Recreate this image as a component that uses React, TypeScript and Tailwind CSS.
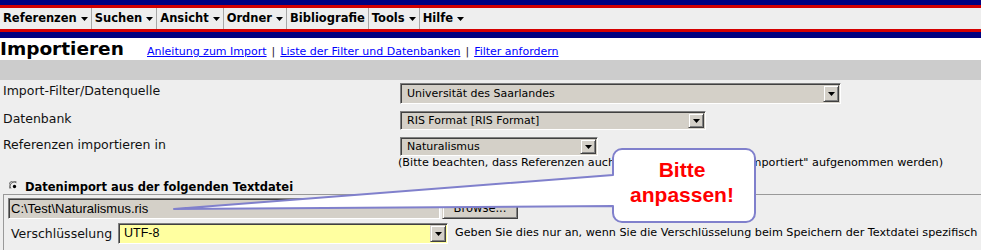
import React from "react";

const menu = [
  { label: "Referenzen", arrow: true },
  { label: "Suchen", arrow: true },
  { label: "Ansicht", arrow: true },
  { label: "Ordner", arrow: true },
  { label: "Bibliografie", arrow: false },
  { label: "Tools", arrow: true },
  { label: "Hilfe", arrow: true },
];

function Caret() {
  return (
    <svg width="7" height="4" viewBox="0 0 7 4" className="shrink-0">
      <path d="M0 0H7L3.5 4Z" fill="#000" />
    </svg>
  );
}

function DropButton() {
  return (
    <div className="flex h-full w-[16px] shrink-0 items-center justify-center border border-t-[#d4d0c8] border-l-[#d4d0c8] border-r-[#404040] border-b-[#404040] bg-[#d4d0c8] shadow-[inset_1px_1px_0_#ffffff,inset_-1px_-1px_0_#808080]">
      <Caret />
    </div>
  );
}

function Select({ value, className }: { value: string; className: string }) {
  return (
    <div
      className={`flex shrink-0 items-stretch border border-t-[#808080] border-l-[#808080] border-r-white border-b-white p-[1px] pl-[6px] shadow-[inset_1px_1px_0_#404040] ${className}`}
    >
      <span className="flex flex-1 items-center overflow-hidden whitespace-nowrap">{value}</span>
      <DropButton />
    </div>
  );
}

function Radio() {
  return (
    <svg width="11" height="11" viewBox="0 0 12 12" className="shrink-0">
      <path d="M1 8A5 5 0 0 1 8 1" stroke="#808080" strokeWidth="1.2" fill="none" />
      <path d="M2.5 8.5A4 4 0 0 1 8.5 2.5" stroke="#404040" strokeWidth="1" fill="none" />
      <circle cx="6" cy="6" r="4" fill="#eeeeee" />
      <circle cx="6" cy="6" r="1.8" fill="#000" />
    </svg>
  );
}

export default function App() {
  return (
    <div className="relative h-[250px] w-[981px] overflow-hidden bg-[#eeeeee] font-['DejaVu_Sans',sans-serif] text-[#111]">
      <div className="h-[5px] bg-[#000080]" />
      <div className="h-[3px] bg-[#d40000]" />
      <nav className="flex h-[21px] items-center bg-[#eeeeee] text-[11.5px] font-bold text-black">
        {menu.map((m, i) => (
          <div
            key={m.label}
            className={`flex h-full items-center gap-[4px] px-[3px] ${i < menu.length - 1 ? "border-r border-[#a8a8a8]" : ""}`}
          >
            <span>{m.label}</span>
            {m.arrow && <Caret />}
          </div>
        ))}
      </nav>
      <div className="h-[3px] bg-[#d40000]" />
      <div className="h-[6px] bg-[#000080]" />

      <div className="flex h-[22px] items-baseline bg-white">
        <h1 className="w-[147px] shrink-0 text-[18.5px] leading-[22px] font-bold text-black">Importieren</h1>
        <div className="whitespace-nowrap text-[11px] text-[#222]">
          <a className="text-[#0000ff] underline">Anleitung zum Import</a>
          <span className="mx-[5px]">|</span>
          <a className="text-[#0000ff] underline">Liste der Filter und Datenbanken</a>
          <span className="mx-[5px]">|</span>
          <a className="text-[#0000ff] underline">Filter anfordern</a>
        </div>
      </div>
      <div className="h-[20px] bg-[#cccccc]" />

      <div className="flex flex-col pt-[3px] text-[12.5px] leading-[16px]">
        <div className="flex h-[28px] items-start">
          <div className="w-[400px] shrink-0 pl-[3px]">Import-Filter/Datenquelle</div>
          <Select value="Universität des Saarlandes" className="h-[21px] w-[441px] bg-[#d4d0c8] text-[11px] text-black" />
        </div>
        <div className="flex h-[26px] items-start">
          <div className="w-[400px] shrink-0 pl-[3px]">Datenbank</div>
          <Select value="RIS Format [RIS Format]" className="h-[19px] w-[306px] bg-[#d4d0c8] text-[11px] text-black" />
        </div>
        <div className="flex items-start">
          <div className="w-[400px] shrink-0 pl-[3px]">Referenzen importieren in</div>
          <div className="flex flex-col">
            <Select value="Naturalismus" className="h-[19px] w-[198px] bg-[#d4d0c8] text-[11px] text-black" />
            <div className="-ml-[2px] whitespace-nowrap text-[11.2px] leading-[13px] text-black">
              (Bitte beachten, dass Referenzen auch in den Ordner "Zuletzt importiert" aufgenommen werden)
            </div>
          </div>
        </div>
      </div>

      <div className="flex h-[25px] items-center gap-[5px] pt-[10px] pl-[9px] text-[11.5px] leading-[14px] font-bold text-black">
        <Radio />
        <span>Datenimport aus der folgenden Textdatei</span>
      </div>

      <div className="ml-[3px] h-[60px] border-t border-l border-[#999999] pt-[3px] pl-[4px]">
        <div className="flex items-end gap-[2px]">
          <div className="flex h-[21px] w-[432px] items-center border border-t-[#808080] border-l-[#808080] border-r-white border-b-white bg-[#d4d0c8] pl-[2px] font-['Liberation_Sans',sans-serif] text-[13px] text-black shadow-[inset_1px_1px_0_#404040]">
            C:\Test\Naturalismus.ris
          </div>
          <button className="flex h-[21px] w-[76px] items-center justify-center border border-t-[#d4d0c8] border-l-[#d4d0c8] border-r-[#404040] border-b-[#404040] bg-[#d4d0c8] text-[11.5px] text-black shadow-[inset_1px_1px_0_#ffffff,inset_-1px_-1px_0_#808080]">
            Browse...
          </button>
        </div>
        <div className="mt-[4px] flex items-center">
          <div className="w-[110px] shrink-0 pl-[3px] text-[12.5px] leading-[16px]">Verschlüsselung</div>
          <Select value="UTF-8" className="h-[21px] w-[330px] bg-[#ffffa0] !pl-[5px] font-['Liberation_Sans',sans-serif] text-[12.5px] text-black" />
          <div className="ml-[7px] whitespace-nowrap text-[11.2px] text-black">
            Geben Sie dies nur an, wenn Sie die Verschlüsselung beim Speichern der Textdatei spezifisch
          </div>
        </div>
      </div>

      <svg className="pointer-events-none absolute top-0 left-0" width="981" height="250" viewBox="0 0 981 250">
        <path
          d="M622 149H746A9 9 0 0 1 755 158V213A9 9 0 0 1 746 222H622A9 9 0 0 1 613 213V206L174 209L613 175V158A9 9 0 0 1 622 149Z"
          fill="#ffffff"
          stroke="#8080cc"
          strokeWidth="2"
          strokeLinejoin="round"
        />
      </svg>
      <div className="pointer-events-none absolute top-[157px] left-[611px] w-[142px] text-center font-['Liberation_Sans',sans-serif] text-[21px] leading-[25px] font-bold text-[#ff0000]">
        Bitte
        <br />
        anpassen!
      </div>
    </div>
  );
}
